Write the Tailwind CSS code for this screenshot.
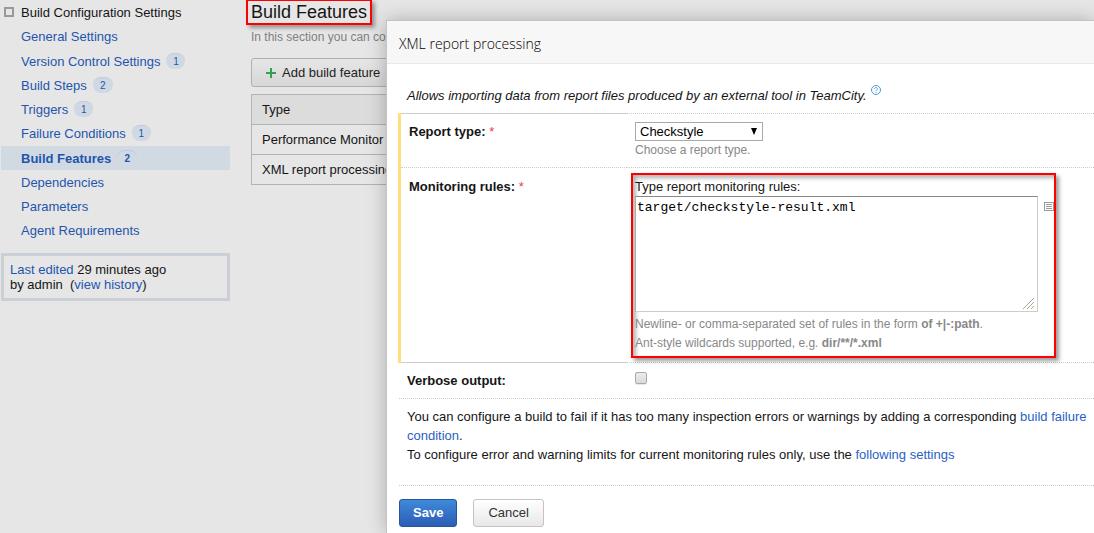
<!DOCTYPE html>
<html lang="en">
<head>
<meta charset="utf-8">
<meta name="viewport" content="width=device-width, initial-scale=1">
<title>Build Features</title>
<script src="https://cdn.jsdelivr.net/npm/@tailwindcss/browser@4"></script>
</head>
<body class="relative min-h-screen overflow-hidden bg-[#e6e6e6] font-['Liberation_Sans',Arial,sans-serif] text-[13px] leading-[15px] text-[#151515]">
<div class="flex">
  <aside class="w-[230px] shrink-0 pl-px">
    <div class="flex h-6 items-center gap-[7px] pl-[3px]">
      <span class="size-[10px] border-2 border-[#999]"></span>
      <span>Build Configuration Settings</span>
    </div>
    <nav class="text-[#1e55ad]">
      <a href="#" class="mb-px flex h-6 items-center pl-5">General Settings</a>
      <a href="#" class="flex h-6 items-center gap-[6px] pl-5">Version Control Settings <span class="flex h-4 w-[19px] items-center justify-center rounded-full border-t border-[#c2ccd8] bg-[#d0d9e3] text-[10px]">1</span></a>
      <a href="#" class="flex h-6 items-center gap-[6px] pl-5">Build Steps <span class="flex h-4 w-5 items-center justify-center rounded-full border-t border-[#c2ccd8] bg-[#d0d9e3] text-[10px]">2</span></a>
      <a href="#" class="flex h-6 items-center gap-[6px] pl-5">Triggers <span class="flex h-4 w-[19px] items-center justify-center rounded-full border-t border-[#c2ccd8] bg-[#d0d9e3] text-[10px]">1</span></a>
      <a href="#" class="mb-px flex h-6 items-center gap-[6px] pl-5">Failure Conditions <span class="flex h-4 w-[19px] items-center justify-center rounded-full border-t border-[#c2ccd8] bg-[#d0d9e3] text-[10px]">1</span></a>
      <a href="#" aria-current="page" class="flex h-6 items-center gap-[6px] bg-[#d1dae3] pl-5 font-bold">Build Features <span class="flex h-4 w-5 items-center justify-center rounded-full border-t border-[#bfcbd8] bg-[#d1dae3] text-[10px]">2</span></a>
      <a href="#" class="flex h-6 items-center pl-5">Dependencies</a>
      <a href="#" class="flex h-6 items-center pl-5">Parameters</a>
      <a href="#" class="flex h-6 items-center pl-5">Agent Requirements</a>
    </nav>
    <div class="mt-[11px] border-3 border-[#cbd0d6] px-[6px] pt-[6px] pb-[6px]">
      <p><a href="#" class="text-[#1e55ad]">Last edited</a> 29 minutes ago</p>
      <p>by admin &nbsp;(<a href="#" class="text-[#1e55ad]">view history</a>)</p>
    </div>
  </aside>

  <main class="min-w-0 flex-1 pl-4">
    <h1 class="-mt-px w-max border-2 border-[#f00] px-[3px] text-[18px] leading-[22px] shadow-[3px_3px_4px_rgba(0,0,0,0.35)]">Build Features</h1>
    <div class="ml-[5px]">
      <p class="mt-[5px] text-[12px] text-[#808080]">In this section you can configure build features.</p>
      <button type="button" class="mt-[13px] flex h-[29px] items-center gap-[6px] rounded-[3px] border border-[#b0b0b0] bg-linear-to-b from-[#e6e6e6] to-[#d7d7d7] px-[14px] text-[#222]">
        <svg class="size-[10px]" viewBox="0 0 10 10" aria-hidden="true"><path d="M5 0v10M0 5h10" stroke="#2ea44f" stroke-width="2"/></svg>
        Add build feature
      </button>
      <table class="mt-[7px] w-full border-collapse text-left">
        <thead><tr class="h-[30px] bg-[#dcdcdc]"><th class="border border-[#b3b3b3] px-[10px] font-normal">Type</th></tr></thead>
        <tbody>
          <tr class="h-[30px]"><td class="border border-[#b3b3b3] px-[10px]">Performance Monitor</td></tr>
          <tr class="h-[30px]"><td class="border border-[#b3b3b3] px-[10px]">XML report processing</td></tr>
        </tbody>
      </table>
    </div>
  </main>
</div>

<form role="dialog" aria-labelledby="dialog-title" class="absolute top-5 right-0 bottom-0 left-[386px] border-t border-l border-[#c4c4c4] bg-white shadow-[0_0_18px_rgba(0,0,0,0.25)]">
  <header class="flex h-[43px] items-center border-b border-[#e9e9e9] bg-[#f7f7f7] px-3 pt-[3px]">
    <h2 id="dialog-title" class="font-['Open_Sans',sans-serif] text-[14px] leading-5 font-light text-black">XML report processing</h2>
  </header>
  <div class="pl-[11px]">
    <p class="flex h-[49px] items-center gap-1 pt-[14px] pl-[9px] italic">Allows importing data from report files produced by an external tool in TeamCity.
      <a href="#" aria-label="Help" class="-mt-3"><svg class="size-[10px]" viewBox="0 0 10 10" fill="none" stroke="#4a9bd0" aria-hidden="true"><circle cx="5" cy="5" r="4.5"/><path d="M3.500 4c0-2 3-2 3 0 0 1-1.500 1-1.500 2.200M5 7v1" stroke-width=".9"/></svg></a>
    </p>
    <div class="border-l-3 border-[#ffdf7d]">
      <div class="flex h-[55px]">
        <div class="w-[226px] shrink-0 border-t border-b border-b-[#ccc] border-t-[#ccc] [border-bottom-style:dotted] pt-[10px] pl-2"><label for="type" class="font-bold">Report type: <span class="font-normal text-[#f03c3c]">*</span></label></div>
        <div class="flex-1 border-y border-dotted border-[#ccc] pt-2 pl-[8px]">
          <div class="relative w-32">
            <select id="type" class="block h-[19px] w-full appearance-none border border-[#a9a9a9] bg-white pl-1 text-[13px] leading-[15px] text-black"><option>Checkstyle</option></select>
            <svg class="pointer-events-none absolute top-[6px] right-[6px] h-[7px] w-[6px]" viewBox="0 0 6 7" aria-hidden="true"><path d="M0 0h6L3 7z"/></svg>
          </div>
          <p class="mt-px text-[12px] leading-4 text-[#888]">Choose a report type.</p>
        </div>
      </div>
      <div class="flex h-[195px]">
        <div class="w-[226px] shrink-0 border-b border-[#ccc] pt-[11px] pl-2"><label for="rules" class="font-bold">Monitoring rules: <span class="font-normal text-[#f03c3c]">*</span></label></div>
        <div class="flex-1 border-b border-dotted border-[#ccc] pt-[5px] pl-1">
          <div class="h-[185px] w-[425px] border-2 border-[#f00] pt-1 pl-[2px] shadow-[3px_3px_4px_rgba(0,0,0,0.4),inset_3px_3px_4px_rgba(0,0,0,0.3)]">
            <p>Type report monitoring rules:</p>
            <div class="mt-[2px] flex items-start gap-[6px]">
              <div class="relative">
                <textarea id="rules" spellcheck="false" class="block h-[116px] w-[403px] resize-none border border-[#ccc] border-t-[#888] border-l-[#aaa] bg-white px-px py-[3px] font-['Liberation_Mono',monospace] text-[13px] leading-[15px] text-black">target/checkstyle-result.xml</textarea>
                <svg class="pointer-events-none absolute right-1 bottom-[3px] size-[11px]" viewBox="0 0 11 11" stroke="#aaa78f" aria-hidden="true"><path d="M0 11 11 0M4 11l7-7M8 11l3-3"/></svg>
              </div>
              <button type="button" aria-label="Insert from list" class="mt-[6px] shrink-0"><svg class="h-[9px] w-[10px]" viewBox="0 0 10 9" fill="none" stroke="#999" shape-rendering="crispEdges" aria-hidden="true"><path d="M.5.500h9v8h-9zM2 2.500h6M2 4.500h6M2 6.500h6"/></svg></button>
            </div>
            <p class="mt-[3px] text-[12px] leading-[19px] text-[#888]">Newline- or comma-separated set of rules in the form <b>of +|-:path</b>.<br>Ant-style wildcards supported, e.g. <b>dir/**/*.xml</b></p>
          </div>
        </div>
      </div>
    </div>
    <div class="ml-px flex h-9 border-b border-dotted border-[#ccc]">
      <label for="verbose" class="w-[228px] shrink-0 pt-[10px] pl-2 font-bold">Verbose output:</label>
      <div class="pt-[9px] pl-2"><input id="verbose" type="checkbox" class="block size-3 appearance-none rounded-[2px] border border-[#aaa] bg-linear-to-b from-[#ececec] to-[#dadada] shadow-[0_1px_1px_rgba(0,0,0,0.1)]"></div>
    </div>
    <div class="ml-px h-[87px] border-b border-dotted border-[#ccc] pt-2 pl-2 leading-[19px]">
      <p>You can configure a build to fail if it has too many inspection errors or warnings by adding a corresponding <a href="#" class="text-[#2a5fc4]">build failure condition</a>.</p>
      <p>To configure error and warning limits for current monitoring rules only, use the <a href="#" class="text-[#2a5fc4]">following settings</a></p>
    </div>
    <div class="ml-px flex gap-4 pt-[13px]">
      <button type="button" class="h-7 rounded-[3px] border border-[#2a5599] bg-linear-to-b from-[#3f8bdb] to-[#2c5cb5] px-[13px] pb-[2px] font-bold text-white">Save</button>
      <button type="button" class="h-7 rounded-[3px] border border-[#c4c4c4] bg-linear-to-b from-white to-[#e8e8e8] px-[14px] pb-[2px] text-[#333]">Cancel</button>
    </div>
  </div>
</form>
</body>
</html>
